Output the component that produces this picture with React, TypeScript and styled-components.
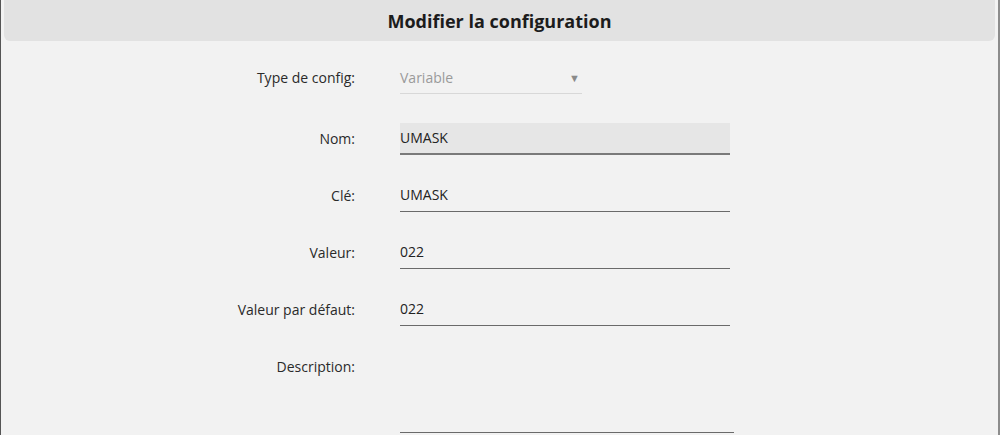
import React from "react";
import styled, { createGlobalStyle } from "styled-components";

const Global = createGlobalStyle`
  html, body { margin: 0; padding: 0; background: #f2f2f2; }
  body { font-family: "Open Sans", "Noto Sans", sans-serif; }
`;

const Frame = styled.div`
  box-sizing: border-box;
  width: 1000px;
  height: 435px;
  overflow: hidden;
  background: #f2f2f2;
  border-left: 1px solid #555;
  border-right: 2px solid #8c8c8c;
  padding: 0 3px 0 3px;
`;

const Header = styled.div`
  height: 41px;
  background: #e2e2e2;
  border-radius: 0 0 6px 6px;
  display: flex;
  align-items: center;
  justify-content: center;
  font-size: 18px;
  font-weight: 700;
  color: #1c1c1c;
`;

const Form = styled.div`
  display: grid;
  grid-template-columns: 351px 334px;
  column-gap: 45px;
  padding-top: 21px;
`;

const Label = styled.div<{ $h: number }>`
  height: ${(p) => p.$h}px;
  text-align: right;
  font-size: 14px;
  color: #2a2a2a;
  line-height: 32px;
`;

const Field = styled.div<{ $h: number }>`
  height: ${(p) => p.$h}px;
  font-size: 14px;
  color: #222;
  line-height: 32px;
`;

const Input = styled.div<{ $filled?: boolean }>`
  box-sizing: border-box;
  height: 32px;
  width: 330px;
  background: ${(p) => (p.$filled ? "#e6e6e6" : "transparent")};
  border-bottom: ${(p) => (p.$filled ? "2px solid #7a7a7a" : "1px solid #6a6a6a")};
  line-height: 30px;
`;

const Select = styled.div`
  box-sizing: border-box;
  width: 182px;
  height: 32px;
  border-bottom: 1px solid #d8d8d8;
  color: #9a9a9a;
  display: flex;
  align-items: center;
  justify-content: space-between;
  line-height: 30px;
`;

const Caret = styled.span`
  font-size: 11px;
  color: #8a8a8a;
  margin-right: 2px;
`;

const TextArea = styled.div`
  box-sizing: border-box;
  width: 334px;
  height: 82px;
  border-bottom: 1px solid #6a6a6a;
`;

export default function App() {
  return (
    <>
      <Global />
      <Frame>
        <Header>Modifier la configuration</Header>
        <Form>
          <Label $h={61}>Type de config:</Label>
          <Field $h={61}>
            <Select>
              Variable
              <Caret>▼</Caret>
            </Select>
          </Field>
          <Label $h={57}>Nom:</Label>
          <Field $h={57}>
            <Input $filled>UMASK</Input>
          </Field>
          <Label $h={57}>Clé:</Label>
          <Field $h={57}>
            <Input>UMASK</Input>
          </Field>
          <Label $h={57}>Valeur:</Label>
          <Field $h={57}>
            <Input>022</Input>
          </Field>
          <Label $h={57}>Valeur par défaut:</Label>
          <Field $h={57}>
            <Input>022</Input>
          </Field>
          <Label $h={82}>Description:</Label>
          <Field $h={82}>
            <TextArea />
          </Field>
        </Form>
      </Frame>
    </>
  );
}
